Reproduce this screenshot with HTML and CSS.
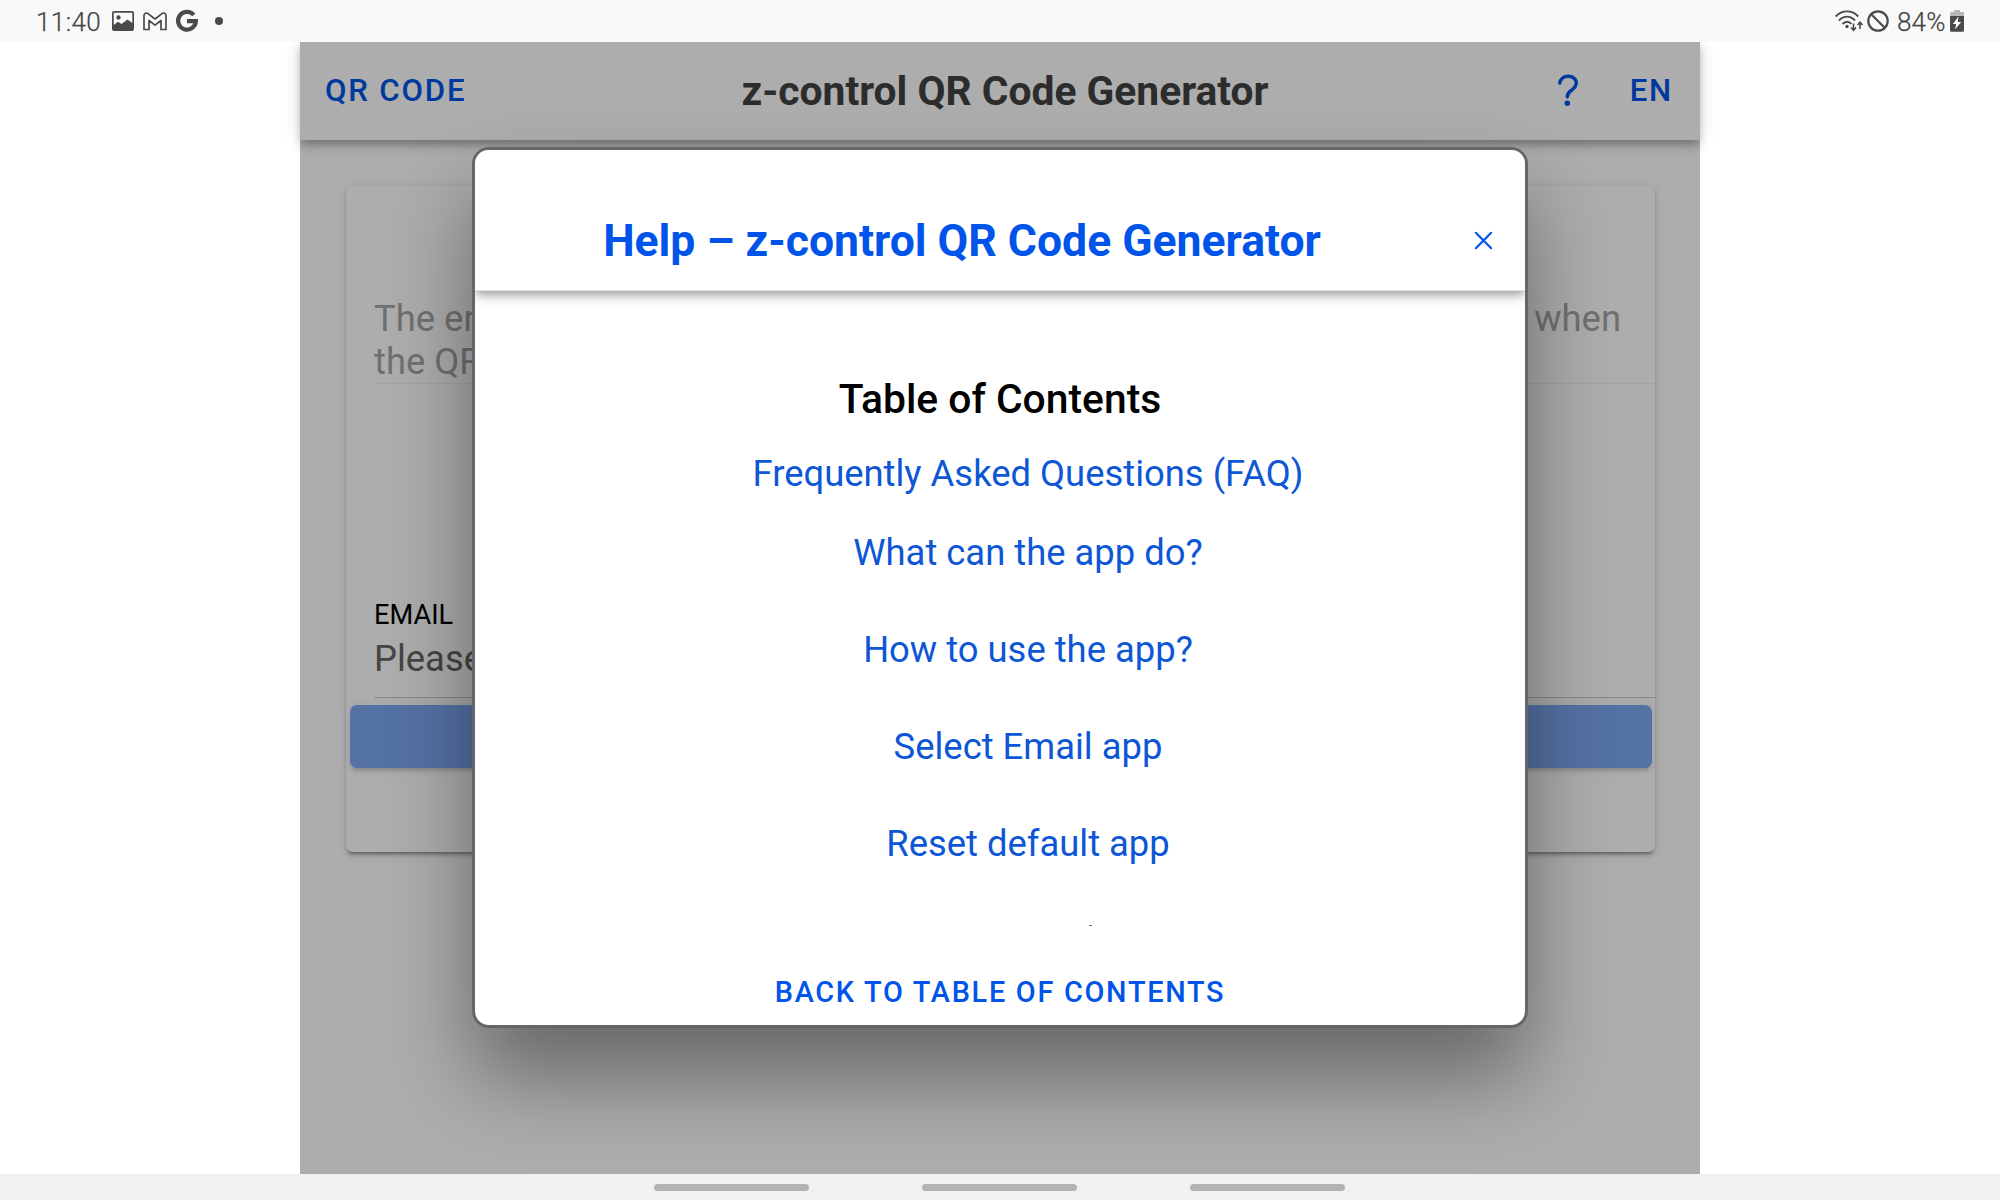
FILE: index.html
```html
<!DOCTYPE html>
<html lang="en">
<head>
<meta charset="utf-8">
<title>z-control QR Code Generator</title>
<link rel="stylesheet" href="styles.css">
</head>
<body>
<div class="screen">
  <div class="status-bar">
    <div class="status-group">
      <span class="clock">11:40</span>
      <svg class="icon-picture" viewBox="0 0 22 20"><path fill="#4a4a4a" fill-rule="evenodd" d="M2 0h18a2 2 0 0 1 2 2v16a2 2 0 0 1-2 2H2a2 2 0 0 1-2-2V2a2 2 0 0 1 2-2zm-.300 1.700V14l4.300-3.200 3.500 2.200L15.500 8.500 20.300 12V1.700zM6.500 4.200a2.200 2.200 0 1 1 0 4.400 2.200 2.200 0 0 1 0-4.400z"/></svg>
      <svg class="icon-mail" viewBox="0 0 24 19"><path fill="none" stroke="#4a4a4a" stroke-width="1.700" stroke-linejoin="round" d="M1 17.500V3.500C1 1 3.500.500 5 1.600L12 7l7-5.400c1.500-1.100 4-.600 4 1.900v14h-5V8.500l-6 4.700-6-4.700v9z"/></svg>
      <svg class="icon-g" viewBox="0 0 22 22"><path fill="none" stroke="#4a4a4a" stroke-width="4.200" d="M17.800 5A8.900 8.900 0 1 0 19.900 11.200H11"/></svg>
      <span class="dot"></span>
    </div>
    <div class="status-group">
      <svg class="icon-wifi" viewBox="0 0 28 22"><g fill="none" stroke="#4a4a4a" stroke-width="1.900"><path d="M.700 6.500C7-.300 17-.300 23.300 6.500M4 10.500C8.800 5.300 15.200 5.300 20 10.500M7.500 14c2.800-3 6.500-3 9 0"/><path stroke-width="1.600" d="M18.500 13.500v6.500M16 17.500l2.500 2.800 2.500-2.800M25 19v-6.500M22.500 15l2.500-2.800 2.500 2.800"/></g><circle cx="12" cy="16.500" r="1.700" fill="#4a4a4a"/></svg>
      <svg class="icon-block" viewBox="0 0 22 22"><g fill="none" stroke="#4a4a4a" stroke-width="2.200"><circle cx="11" cy="11" r="9.700"/><path d="M4 4l14 14"/></g></svg>
      <span class="charge">84%</span>
      <svg class="icon-battery" viewBox="0 0 14 22"><path fill="#b9b9b9" d="M4 0h6v2h4v4H0V2h4z"/><path fill="#4a4a4a" d="M0 6h14v14.500a1.200 1.200 0 0 1-1.200 1.200H1.200A1.200 1.200 0 0 1 0 20.500z"/><path fill="#fff" d="M8.500 6.500L2.800 14h3.400L5 19.500 11.200 12H7.800z"/></svg>
    </div>
  </div>

  <div class="app">
    <header class="toolbar">
      <span class="tool-button">QR CODE</span>
      <h1 class="toolbar-title">z-control QR Code Generator</h1>
      <div class="toolbar-end">
        <svg class="icon-help" viewBox="0 0 512 512"><path fill="none" stroke="#0054e9" stroke-width="40" stroke-linecap="round" stroke-miterlimit="10" d="M160 164s1.440-33 33.540-59.460C212.600 88.830 235.490 84.280 256 84c18.730-.230 35.470 2.940 45.480 7.820C318.590 100.200 352 120.600 352 164c0 45.670-29.180 66.370-62.350 89.180S248 298.360 248 324"/><circle cx="248" cy="399.990" r="32" fill="#0054e9"/></svg>
        <span class="tool-button">EN</span>
      </div>
    </header>
    <main class="card">
      <div class="field field-readonly">
        <div class="field-line"><span>The entered email address will be used as the recipient</span><span>when</span></div>
        <div>the QR code is scanned.</div>
      </div>
      <div class="field field-email">
        <label class="field-label">EMAIL</label>
        <div class="field-value">Please enter email address</div>
      </div>
      <div class="submit"></div>
    </main>
    <div class="backdrop">
      <section class="modal">
        <header class="modal-header">
          <h2 class="modal-title">Help – z-control QR Code Generator</h2>
          <svg class="icon-close" viewBox="0 0 512 512"><path fill="none" stroke="#0054e9" stroke-width="32" stroke-linecap="round" d="M368 368L144 144M368 144L144 368"/></svg>
        </header>
        <div class="modal-body">
          <h3 class="toc-title">Table of Contents</h3>
          <ul class="toc">
            <li class="toc-first">Frequently Asked Questions (FAQ)</li>
            <li>What can the app do?</li>
            <li>How to use the app?</li>
            <li>Select Email app</li>
            <li>Reset default app</li>
          </ul>
          <div class="cut-off"></div>
        </div>
        <footer class="modal-footer">BACK TO TABLE OF CONTENTS</footer>
      </section>
    </div>
  </div>

  <div class="nav-bar"><span></span><span></span><span></span></div>
</div>
</body>
</html>
```
FILE: styles.css
```css
* { box-sizing: border-box; }
body { margin: 0; font-family: Roboto, "Noto Sans", sans-serif; background: #fff; }
h1, h2, h3, ul { margin: 0; padding: 0; list-style: none; }
svg { display: block; flex: none; overflow: visible; }

.screen { width: 2000px; height: 1200px; overflow: hidden; display: flex; flex-direction: column; align-items: center; }

/* system bars */
.status-bar { width: 100%; height: 42px; flex: none; background: #f9f9f9; display: flex; justify-content: space-between; padding: 0 36px; position: relative; z-index: 2; color: #444; font-size: 26px; font-weight: 300; -webkit-text-stroke: .25px #444; }
.status-group { display: flex; align-items: center; }
.clock { line-height: 42px; padding-top: 2px; width: 76px; letter-spacing: .4px; }
.icon-picture { width: 22px; height: 20px; }
.icon-mail { width: 24px; height: 19px; margin-left: 9px; }
.icon-g { width: 22px; height: 22px; margin-left: 9px; }
.dot { width: 8px; height: 8px; border-radius: 50%; background: #4a4a4a; margin-left: 17px; }
.icon-wifi { width: 28px; height: 22px; }
.icon-block { width: 22px; height: 22px; margin-left: 4px; }
.charge { line-height: 42px; padding-top: 2px; margin-left: 8px; width: 49px; letter-spacing: .2px; }
.icon-battery { width: 14px; height: 22px; margin-left: 4px; }
.nav-bar { width: 100%; height: 26px; flex: none; background: #f1f1f1; position: relative; z-index: 2; display: flex; justify-content: center; align-items: center; gap: 113px; padding-right: 2px; }
.nav-bar span { width: 155px; height: 7px; border-radius: 4px; background: #b3b3b3; }

/* app */
.app { width: 1400px; height: 1132px; flex: none; position: relative; background: #fff; }
.toolbar { height: 98px; display: flex; align-items: center; justify-content: space-between; padding: 0 27px 0 25px; background: #fff; position: relative; z-index: 1; box-shadow: 0 3.5px 7px -1.75px rgba(0,0,0,.2), 0 7px 8.750px rgba(0,0,0,.14), 0 1.750px 17.500px rgba(0,0,0,.12); }
.tool-button { font-size: 31.200px; font-weight: 500; letter-spacing: .058em; color: #0054e9; line-height: 44px; }
.toolbar-title { font-size: 40.750px; font-weight: 700; color: #424242; line-height: 50px; padding: 0 2px 0 0; }
.toolbar-end { display: flex; align-items: center; gap: 40px; }
.icon-help { width: 44px; height: 44px; }
.card { width: 1309px; height: 666px; margin: 46px 0 0 46px; border-radius: 7px; padding: 111px 0 0 28px; box-shadow: 0 5.250px 1.750px -3.500px rgba(0,0,0,.2), 0 3.500px 3.500px rgba(0,0,0,.14), 0 1.750px 8.750px rgba(0,0,0,.12); }
.field { font-size: 36.400px; line-height: 43px; white-space: nowrap; overflow: hidden; }
.field-readonly { height: 87px; color: #a6a6a6; border-bottom: 1px solid #f0f0f0; }
.field-line { display: flex; justify-content: space-between; padding-right: 34px; }
.field-email { height: 314px; padding-top: 215px; border-bottom: 1px solid #c8c7cc; }
.field-label { display: block; font-size: 27.200px; line-height: 33px; color: #000; }
.field-value { margin-top: 5px; color: #666; }
.submit { width: 1302px; height: 63px; margin: 7px 0 0 -24px; border-radius: 7px; background: #0054e9; opacity: .5; box-shadow: 0 5.250px 1.750px -3.500px rgba(0,0,0,.2), 0 3.500px 3.500px rgba(0,0,0,.14), 0 1.750px 8.750px rgba(0,0,0,.12); }

/* help dialog */
.backdrop { position: absolute; inset: 0; z-index: 1; background: rgba(0,0,0,.32); display: flex; justify-content: center; padding-top: 105px; overflow: hidden; }
.modal { width: 1056px; height: 881px; border: 3px solid #65666b; border-radius: 17px; background: #fff; overflow: hidden; box-shadow: 0 49px 84px rgba(0,0,0,.4); display: flex; flex-direction: column; text-align: center; }
.modal-header { height: 141px; flex: none; padding: 41px 24px 0 0; display: flex; align-items: center; border-bottom: 1px solid #e2e2e2; position: relative; z-index: 1; background: #fff; box-shadow: 0 3.500px 7px -1.750px rgba(0,0,0,.2), 0 7px 8.750px rgba(0,0,0,.14), 0 1.750px 17.500px rgba(0,0,0,.12); }
.modal-title { flex: 1; font-size: 44.500px; font-weight: 700; color: #0054e9; line-height: 54px; padding: 1px 17px 0 0; }
.icon-close { width: 35px; height: 35px; }
.modal-body { flex: none; height: 635px; padding-top: 84px; }
.toc-title { font-size: 40.800px; font-weight: 500; line-height: 48px; color: #000; }
.toc { padding: 11px 0 0 56px; font-size: 36.400px; color: #0d56d6; }
.toc li { line-height: 44px; margin-bottom: 53px; }
.toc .toc-first { line-height: 79px; margin-bottom: 18px; }
.cut-off { width: 3px; height: 1px; margin: 59px 0 0 614px; background: #3d7ba8; }
.toc li:last-child { margin-bottom: 0; }
.modal-footer { font-size: 28.850px; font-weight: 500; letter-spacing: .06em; color: #0054e9; line-height: 36px; padding-top: 48px; }
```
